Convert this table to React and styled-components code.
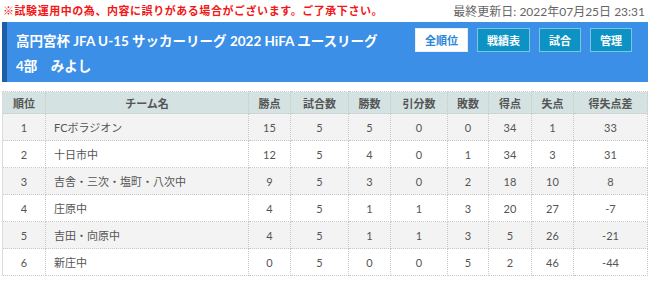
import React from "react";
import styled, { createGlobalStyle } from "styled-components";

const Global = createGlobalStyle`
  html, body { margin: 0; padding: 0; background: #fff; }
  body { font-family: Lato, "Noto Sans CJK JP", sans-serif; }
`;

const Page = styled.div`
  width: 650px;
  padding: 0 2px;
  box-sizing: border-box;
`;

const TopBar = styled.div`
  height: 22px;
  display: flex;
  align-items: center;
  justify-content: space-between;
  padding: 0 3px 2px 1px;
  box-sizing: border-box;
`;

const Notice = styled.span`
  color: #f01818;
  font-weight: 700;
  font-size: 11px;
  letter-spacing: 0.55px;
  font-family: "Noto Sans CJK JP", sans-serif;
`;

const Updated = styled.span`
  color: #666;
  font-size: 12px;
  font-family: Lato, "Noto Sans CJK JP", sans-serif;
`;

const Header = styled.div`
  background: #3b8fe7;
  border-left: 5px solid #1d5ea6;
  height: 60px;
  box-sizing: border-box;
  padding: 6px 16px 0 9px;
  color: #fff;
`;

const TitleRow = styled.div`
  display: flex;
  align-items: center;
  justify-content: space-between;
  height: 24px;
`;

const Title = styled.div`
  font-weight: 700;
  font-size: 13.5px;
  font-family: Lato, "Noto Sans CJK JP", sans-serif;
`;

const Sub = styled.div`
  font-weight: 700;
  font-size: 13.5px;
  line-height: 20px;
  margin-top: 4px;
  font-family: Lato, "Noto Sans CJK JP", sans-serif;
  white-space: pre;
`;

const Buttons = styled.div`
  display: flex;
  gap: 9px;
`;

const Btn = styled.div`
  height: 24px;
  box-sizing: border-box;
  padding: 0 9px;
  display: flex;
  align-items: center;
  font-size: 11px;
  font-weight: 700;
  font-family: "Noto Sans CJK JP", sans-serif;
  background: ${(p) => (p.$active ? "#fff" : "#0d93c3")};
  color: ${(p) => (p.$active ? "#2a86d8" : "#fff")};
  border: 1px solid ${(p) => (p.$active ? "#e6eef8" : "#7cc3e6")};
`;

const Table = styled.table`
  margin-top: 9px;
  width: 645px;
  border-collapse: collapse;
  table-layout: fixed;
  font-size: 11px;
  color: #555;
  font-family: Lato, "Noto Sans CJK JP", sans-serif;
`;

const Th = styled.th`
  background: #d4e2e2;
  height: 21px;
  font-weight: 700;
  color: #555;
  border: 1px dotted #c8c8c8;
  border-left: ${(p) => (p.$first ? "1px solid #dcdcdc" : "1px dotted #c8c8c8")};
  padding: 0;
  font-family: "Noto Sans CJK JP", sans-serif;
`;

const Tr = styled.tr`
  background: ${(p) => (p.$odd ? "#f3f3f3" : "#fff")};
`;

const Td = styled.td`
  height: 26px;
  padding: 0 ${(p) => (p.$left ? "8px" : "0")};
  text-align: ${(p) => (p.$left ? "left" : "center")};
  border: 1px dotted #c8c8c8;
  border-left: ${(p) => (p.$first ? "1px solid #dcdcdc" : "1px dotted #c8c8c8")};
`;

const widths = [43, 203, 42, 58, 42, 57, 41, 43, 42, 74];
const heads = ["順位", "チーム名", "勝点", "試合数", "勝数", "引分数", "敗数", "得点", "失点", "得失点差"];
const rows = [
  [1, "FCボラジオン", 15, 5, 5, 0, 0, 34, 1, 33],
  [2, "十日市中", 12, 5, 4, 0, 1, 34, 3, 31],
  [3, "吉舎・三次・塩町・八次中", 9, 5, 3, 0, 2, 18, 10, 8],
  [4, "庄原中", 4, 5, 1, 1, 3, 20, 27, -7],
  [5, "吉田・向原中", 4, 5, 1, 1, 3, 5, 26, -21],
  [6, "新庄中", 0, 5, 0, 0, 5, 2, 46, -44],
];

export default function App() {
  return (
    <Page>
      <Global />
      <TopBar>
        <Notice>※試験運用中の為、内容に誤りがある場合がございます。ご了承下さい。</Notice>
        <Updated>最終更新日: 2022年07月25日 23:31</Updated>
      </TopBar>
      <Header>
        <TitleRow>
          <Title>高円宮杯 JFA U-15 サッカーリーグ 2022 HiFA ユースリーグ</Title>
          <Buttons>
            <Btn $active>全順位</Btn>
            <Btn>戦績表</Btn>
            <Btn>試合</Btn>
            <Btn>管理</Btn>
          </Buttons>
        </TitleRow>
        <Sub>{"4部　みよし"}</Sub>
      </Header>
      <Table>
        <colgroup>
          {widths.map((w, i) => (
            <col key={i} style={{ width: w }} />
          ))}
        </colgroup>
        <thead>
          <tr>
            {heads.map((h, i) => (
              <Th key={h} $first={i === 0}>{h}</Th>
            ))}
          </tr>
        </thead>
        <tbody>
          {rows.map((r, ri) => (
            <Tr key={ri} $odd={ri % 2 === 0}>
              {r.map((c, ci) => (
                <Td key={ci} $first={ci === 0} $left={ci === 1}>
                  {c}
                </Td>
              ))}
            </Tr>
          ))}
        </tbody>
      </Table>
    </Page>
  );
}
